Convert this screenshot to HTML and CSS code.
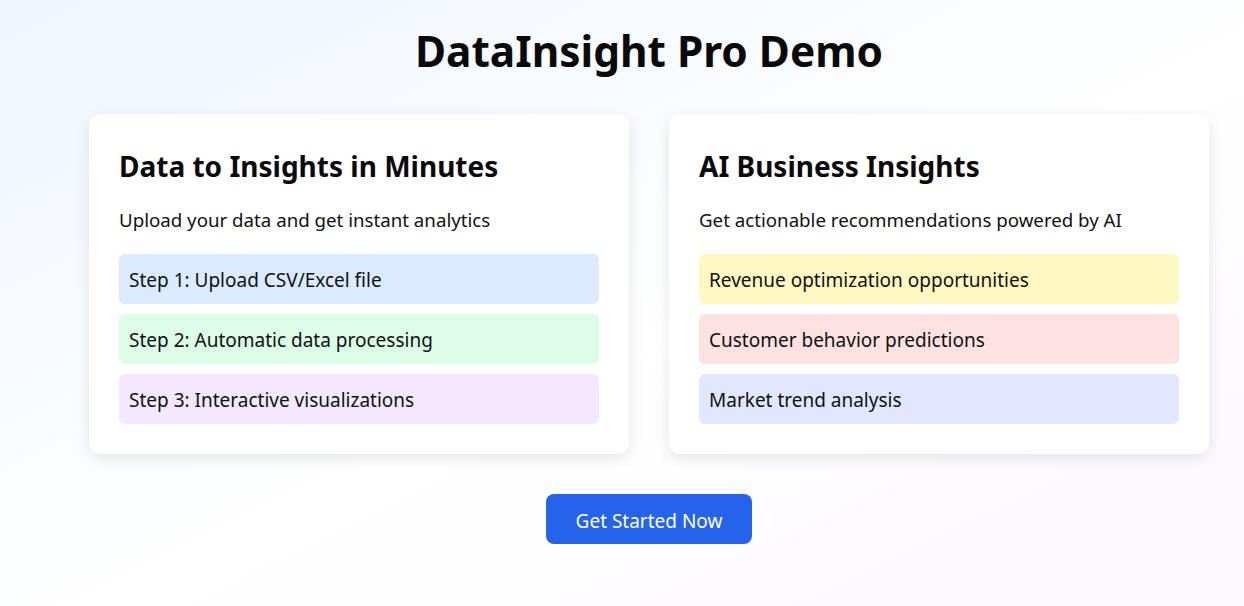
FILE: index.html
```html
<!DOCTYPE html>
<html lang="en">
<head>
<meta charset="utf-8">
<title>DataInsight Pro Demo</title>
<link rel="stylesheet" href="styles.css">
</head>
<body>
<main class="page">
  <h1 class="title">DataInsight Pro Demo</h1>
  <div class="cards">
    <section class="card">
      <h2 class="card-title">Data to Insights in Minutes</h2>
      <p class="card-text">Upload your data and get instant analytics</p>
      <ul class="items">
        <li class="item blue">Step 1: Upload CSV/Excel file</li>
        <li class="item green">Step 2: Automatic data processing</li>
        <li class="item purple">Step 3: Interactive visualizations</li>
      </ul>
    </section>
    <section class="card">
      <h2 class="card-title">AI Business Insights</h2>
      <p class="card-text">Get actionable recommendations powered by AI</p>
      <ul class="items">
        <li class="item yellow">Revenue optimization opportunities</li>
        <li class="item red">Customer behavior predictions</li>
        <li class="item indigo">Market trend analysis</li>
      </ul>
    </section>
  </div>
  <div class="actions">
    <button class="cta" type="button">Get Started Now</button>
  </div>
</main>
</body>
</html>
```

FILE: styles.css
```css
* { box-sizing: border-box; }
html, body { margin: 0; padding: 0; }
body {
  min-height: 100vh;
  background: linear-gradient(to bottom right in oklab, #eff6ff, #ffffff 55%, #fbf7ff);
  font-family: "Noto Sans", "Open Sans", Arial, sans-serif;
  color: #111;
}
.page {
  padding: 27px 0 40px 54px;
}
.title {
  margin: 0;
  text-align: center;
  font-size: 42.4px;
  line-height: 48px;
  font-weight: 700;
  color: #0a0a0a;
}
.cards {
  max-width: 1120px;
  margin: 39px auto 0;
  display: grid;
  grid-template-columns: 1fr 1fr;
  gap: 40px;
}
.card {
  background: #fff;
  border-radius: 12px;
  padding: 30px;
  box-shadow: 0 4px 16px rgba(0, 0, 0, 0.1);
}
.card-title {
  margin: 4px 0 0;
  font-size: 28px;
  line-height: 36px;
  font-weight: 700;
  color: #0a0a0a;
}
.card-text {
  margin: 23px 0 0;
  font-size: 18.7px;
  line-height: 26px;
}
.items {
  list-style: none;
  margin: 21px 0 0;
  padding: 0;
  display: flex;
  flex-direction: column;
  gap: 10px;
}
.item {
  height: 50px;
  display: flex;
  align-items: center;
  padding: 2px 10px 0;
  border-radius: 6px;
  font-size: 19px;
}
.blue { background: #dbeafe; }
.green { background: #dcfce7; }
.purple { background: #f3e8ff; }
.yellow { background: #fef9c3; }
.red { background: #fee2e2; }
.indigo { background: #e0e7ff; }
.actions {
  display: flex;
  justify-content: center;
  margin-top: 40px;
}
.cta {
  width: 206px;
  height: 50px;
  padding: 3px 0 0;
  border: none;
  border-radius: 8px;
  background: #2563eb;
  color: #fff;
  font-family: inherit;
  font-size: 19px;
  cursor: pointer;
}
```
